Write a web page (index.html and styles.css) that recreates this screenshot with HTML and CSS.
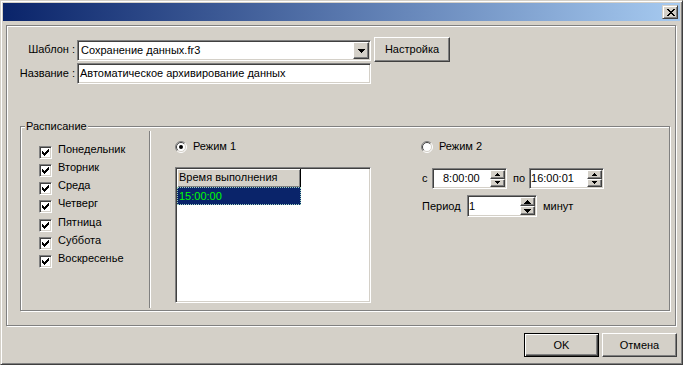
FILE: index.html
```html
<!DOCTYPE html>
<html lang="ru">

<head>
    <meta charset="UTF-8">
    <meta name="viewport" content="width=device-width, initial-scale=1.0">
    <title>Расписание отчёта</title>
    <link rel="stylesheet" href="styles.css">
</head>

<body>
    <div class="window">
        <div class="titlebar">
            <button class="close-btn">
                <svg width="8" height="7" viewBox="0 0 8 7"><path d="M0 0h2v1H0zM6 0h2v1H6zM1 1h2v1H1zM5 1h2v1H5zM2 2h4v1H2zM3 3h2v1H3zM2 4h4v1H2zM1 5h2v1H1zM5 5h2v1H5zM0 6h2v1H0zM6 6h2v1H6z" fill="#000"/></svg>
            </button>
        </div>

        <div class="panel">
            <div class="form-grid">
                <span class="field-label">Шаблон :</span>
                <div class="combo sunken">
                    <span class="combo-text">Сохранение данных.fr3</span>
                    <span class="combo-arrow raised">
                        <svg width="7" height="4" viewBox="0 0 7 4"><path d="M0 0h7v1H0zM1 1h5v1H1zM2 2h3v1H2zM3 3h1v1H3z" fill="#000"/></svg>
                    </span>
                </div>
                <button class="btn btn-setup">Настройка</button>
                <span class="field-label">Название :</span>
                <div class="name-edit sunken">Автоматическое архивирование данных</div>
            </div>

            <div class="groupbox">
                <span class="legend">Расписание</span>

                <div class="days">
                    <div class="day"><span class="checkbox sunken"><svg width="7" height="7" viewBox="0 0 7 7"><path d="M6 0h1v1H6zM5 1h2v1H5zM0 2h1v1H0zM4 2h3v1H4zM0 3h2v1H0zM3 3h3v1H3zM0 4h5v1H0zM1 5h3v1H1zM2 6h1v1H2z" fill="#000"/></svg></span>Понедельник</div>
                    <div class="day"><span class="checkbox sunken"><svg width="7" height="7" viewBox="0 0 7 7"><path d="M6 0h1v1H6zM5 1h2v1H5zM0 2h1v1H0zM4 2h3v1H4zM0 3h2v1H0zM3 3h3v1H3zM0 4h5v1H0zM1 5h3v1H1zM2 6h1v1H2z" fill="#000"/></svg></span>Вторник</div>
                    <div class="day"><span class="checkbox sunken"><svg width="7" height="7" viewBox="0 0 7 7"><path d="M6 0h1v1H6zM5 1h2v1H5zM0 2h1v1H0zM4 2h3v1H4zM0 3h2v1H0zM3 3h3v1H3zM0 4h5v1H0zM1 5h3v1H1zM2 6h1v1H2z" fill="#000"/></svg></span>Среда</div>
                    <div class="day"><span class="checkbox sunken"><svg width="7" height="7" viewBox="0 0 7 7"><path d="M6 0h1v1H6zM5 1h2v1H5zM0 2h1v1H0zM4 2h3v1H4zM0 3h2v1H0zM3 3h3v1H3zM0 4h5v1H0zM1 5h3v1H1zM2 6h1v1H2z" fill="#000"/></svg></span>Четверг</div>
                    <div class="day"><span class="checkbox sunken"><svg width="7" height="7" viewBox="0 0 7 7"><path d="M6 0h1v1H6zM5 1h2v1H5zM0 2h1v1H0zM4 2h3v1H4zM0 3h2v1H0zM3 3h3v1H3zM0 4h5v1H0zM1 5h3v1H1zM2 6h1v1H2z" fill="#000"/></svg></span>Пятница</div>
                    <div class="day"><span class="checkbox sunken"><svg width="7" height="7" viewBox="0 0 7 7"><path d="M6 0h1v1H6zM5 1h2v1H5zM0 2h1v1H0zM4 2h3v1H4zM0 3h2v1H0zM3 3h3v1H3zM0 4h5v1H0zM1 5h3v1H1zM2 6h1v1H2z" fill="#000"/></svg></span>Суббота</div>
                    <div class="day"><span class="checkbox sunken"><svg width="7" height="7" viewBox="0 0 7 7"><path d="M6 0h1v1H6zM5 1h2v1H5zM0 2h1v1H0zM4 2h3v1H4zM0 3h2v1H0zM3 3h3v1H3zM0 4h5v1H0zM1 5h3v1H1zM2 6h1v1H2z" fill="#000"/></svg></span>Воскресенье</div>
                </div>

                <div class="separator"></div>

                <div class="mode mode-one">
                    <div class="radio-row">
                        <svg class="radio" width="12" height="12" viewBox="0 0 12 12">
                            <circle cx="6" cy="6" r="5" fill="#fff"/>
                            <path d="M2.1 9.9A5.5 5.5 0 0 1 9.9 2.1" fill="none" stroke="#808080"/>
                            <path d="M9.9 2.1A5.5 5.5 0 0 1 2.1 9.9" fill="none" stroke="#fff"/>
                            <path d="M2.8 9.2A4.5 4.5 0 0 1 9.2 2.8" fill="none" stroke="#404040"/>
                            <path d="M9.2 2.8A4.5 4.5 0 0 1 2.8 9.2" fill="none" stroke="#d4d0c8"/>
                            <circle cx="6" cy="6" r="2" fill="#000"/>
                        </svg>
                        <span>Режим 1</span>
                    </div>
                    <div class="listbox sunken">
                        <div class="list-header">Время выполнения</div>
                        <div class="list-row selected">15:00:00</div>
                    </div>
                </div>

                <div class="mode mode-two">
                    <div class="radio-row">
                        <svg class="radio" width="12" height="12" viewBox="0 0 12 12">
                            <circle cx="6" cy="6" r="5" fill="#fff"/>
                            <path d="M2.1 9.9A5.5 5.5 0 0 1 9.9 2.1" fill="none" stroke="#808080"/>
                            <path d="M9.9 2.1A5.5 5.5 0 0 1 2.1 9.9" fill="none" stroke="#fff"/>
                            <path d="M2.8 9.2A4.5 4.5 0 0 1 9.2 2.8" fill="none" stroke="#404040"/>
                            <path d="M9.2 2.8A4.5 4.5 0 0 1 2.8 9.2" fill="none" stroke="#d4d0c8"/>
                        </svg>
                        <span>Режим 2</span>
                    </div>
                    <div class="range-row">
                        <span class="from-label">с</span>
                        <div class="time-edit sunken">
                            <span class="time-text indent">8:00:00</span>
                            <span class="spin">
                                <span class="spin-btn raised"><svg width="5" height="3" viewBox="0 0 5 3"><path d="M2 0h1v1H2zM1 1h3v1H1zM0 2h5v1H0z" fill="#000"/></svg></span>
                                <span class="spin-btn raised"><svg width="5" height="3" viewBox="0 0 5 3"><path d="M0 0h5v1H0zM1 1h3v1H1zM2 2h1v1H2z" fill="#000"/></svg></span>
                            </span>
                        </div>
                        <span class="to-label">по</span>
                        <div class="time-edit sunken">
                            <span class="time-text">16:00:01</span>
                            <span class="spin">
                                <span class="spin-btn raised"><svg width="5" height="3" viewBox="0 0 5 3"><path d="M2 0h1v1H2zM1 1h3v1H1zM0 2h5v1H0z" fill="#000"/></svg></span>
                                <span class="spin-btn raised"><svg width="5" height="3" viewBox="0 0 5 3"><path d="M0 0h5v1H0zM1 1h3v1H1zM2 2h1v1H2z" fill="#000"/></svg></span>
                            </span>
                        </div>
                    </div>
                    <div class="period-row">
                        <span class="period-label">Период</span>
                        <div class="spin-edit sunken">
                            <span class="time-text">1</span>
                            <span class="spin">
                                <span class="spin-btn raised"><svg width="7" height="4" viewBox="0 0 7 4"><path d="M3 0h1v1H3zM2 1h3v1H2zM1 2h5v1H1zM0 3h7v1H0z" fill="#000"/></svg></span>
                                <span class="spin-btn raised"><svg width="7" height="4" viewBox="0 0 7 4"><path d="M0 0h7v1H0zM1 1h5v1H1zM2 2h3v1H2zM3 3h1v1H3z" fill="#000"/></svg></span>
                            </span>
                        </div>
                        <span class="unit-label">минут</span>
                    </div>
                </div>
            </div>
        </div>

        <div class="footer">
            <button class="btn btn-default">OK</button>
            <button class="btn">Отмена</button>
        </div>
    </div>
</body>

</html>
```

FILE: styles.css
```css
* {
    box-sizing: border-box;
}

body {
    margin: 0;
    background: #d4d0c8;
    font-family: "Liberation Sans", Arial, sans-serif;
    font-size: 11px;
    line-height: 13px;
    color: #000;
}

/* bevels */
.raised {
    background: #d4d0c8;
    border: 1px solid;
    border-color: #fff #404040 #404040 #fff;
    box-shadow: inset -1px -1px 0 #808080;
}

.sunken {
    background: #fff;
    border: 1px solid;
    border-color: #808080 #fff #fff #808080;
    box-shadow: inset 1px 1px 0 #404040, inset -1px -1px 0 #d4d0c8;
}

.window {
    width: 683px;
    height: 365px;
    padding: 2px;
    background: #d4d0c8;
    border: 1px solid;
    border-color: #d4d0c8 #404040 #404040 #d4d0c8;
    box-shadow: inset 1px 1px 0 #fff, inset -1px -1px 0 #808080;
}

.titlebar {
    height: 18px;
    display: flex;
    justify-content: flex-end;
    align-items: center;
    padding-right: 2px;
    background: linear-gradient(to right, #0a246a, #a6caf0);
}

.close-btn {
    width: 16px;
    height: 14px;
    padding: 0 0 0 1px;
    display: flex;
    align-items: center;
    justify-content: center;
    background: #d4d0c8;
    border: 1px solid;
    border-color: #d4d0c8 #404040 #404040 #d4d0c8;
    box-shadow: inset 1px 1px 0 #fff, inset -1px -1px 0 #808080;
}

.close-btn svg {
    display: block;
}

.panel {
    width: 670px;
    height: 301px;
    margin: 4px 0 0 3px;
    border: 1px solid #808080;
    box-shadow: 1px 1px 0 #fff, inset 1px 1px 0 #fff;
}

/* template / name */
.form-grid {
    display: grid;
    grid-template-columns: 68px 294px 77px;
    grid-template-rows: 25px 21px;
    column-gap: 2px;
    row-gap: 1px;
    align-items: start;
    padding-top: 11px;
}

.field-label {
    align-self: center;
    text-align: right;
    white-space: nowrap;
}

.combo {
    display: flex;
    height: 21px;
    margin-top: 3px;
    padding: 1px;
}

.combo-text {
    flex: 1;
    padding-left: 2px;
    line-height: 17px;
}

.combo-arrow {
    width: 16px;
    height: 17px;
    display: flex;
    align-items: center;
    justify-content: center;
}

.combo-arrow svg {
    display: block;
}

.name-edit {
    grid-column: 2;
    height: 21px;
    padding: 1px 1px 1px 2px;
    line-height: 17px;
    white-space: nowrap;
}

.btn {
    width: 75px;
    height: 24px;
    padding: 0;
    font: inherit;
    color: #000;
    background: #d4d0c8;
    border: 1px solid;
    border-color: #fff #404040 #404040 #fff;
    box-shadow: inset -1px -1px 0 #808080;
}

.btn-setup {
    width: 76px;
    height: 25px;
    margin-left: 1px;
}

.btn-default {
    border: 1px solid #000;
    box-shadow: inset 1px 1px 0 #fff, inset -1px -1px 0 #404040, inset -2px -2px 0 #808080;
}

/* schedule group */
.groupbox {
    position: relative;
    display: flex;
    width: 650px;
    height: 185px;
    margin: 42px 0 0 13px;
    border: 1px solid #808080;
    box-shadow: 1px 1px 0 #fff, inset 1px 1px 0 #fff;
}

.legend {
    position: absolute;
    top: -7px;
    left: 4px;
    padding: 0 1px;
    background: #d4d0c8;
}

.days {
    width: 128px;
    padding: 15.5px 0 0 18px;
}

.day {
    display: flex;
    align-items: flex-start;
    height: 18.33px;
    white-space: nowrap;
}

.checkbox {
    width: 13px;
    height: 13px;
    margin: 3px 6px 0 0;
    padding: 2px;
    flex-shrink: 0;
}

.checkbox svg {
    display: block;
}

.separator {
    width: 2px;
    height: 177px;
    margin-top: 4px;
    border-left: 1px solid #808080;
    border-right: 1px solid #fff;
}

.mode-one {
    padding-left: 24px;
}

.mode-two {
    margin-left: 50px;
}

.radio-row {
    display: flex;
    align-items: center;
    height: 13px;
    margin-top: 13px;
    white-space: nowrap;
}

.radio {
    display: block;
    margin-right: 6px;
}

.listbox {
    width: 196px;
    height: 136px;
    margin-top: 14px;
    padding: 1px;
}

.list-header {
    width: 124px;
    height: 18px;
    padding-left: 2px;
    line-height: 17px;
    background: #d4d0c8;
    border-right: 1px solid #000;
    box-shadow: inset 1px 1px 0 #fff, inset -1px -1px 0 #808080;
    white-space: nowrap;
}

.list-row {
    width: 124px;
    height: 18px;
    padding-left: 2px;
    line-height: 18px;
}

.selected {
    background: #0a246a;
    color: #00ff00;
    outline: 1px dotted #9fd3c0;
    outline-offset: -1px;
}

/* mode 2 */
.range-row,
.period-row {
    display: flex;
    align-items: center;
    padding-left: 1px;
    white-space: nowrap;
}

.range-row {
    margin-top: 15px;
}

.period-row {
    margin-top: 6px;
}

.from-label {
    width: 10px;
}

.to-label {
    margin: 0 4px 0 6px;
}

.period-label {
    width: 45px;
}

.unit-label {
    margin-left: 6px;
}

.time-edit,
.spin-edit {
    display: flex;
    padding: 1px;
}

.time-edit {
    width: 75px;
    height: 21px;
}

.spin-edit {
    width: 70px;
    height: 22px;
}

.time-text {
    flex: 1;
    align-self: center;
}

.time-text.indent {
    padding-left: 9px;
}

.spin {
    display: flex;
    flex-direction: column;
    width: 15px;
}

.spin-btn {
    flex: 1;
    display: flex;
    align-items: center;
    justify-content: center;
}

.spin-btn svg {
    display: block;
}

.footer {
    display: flex;
    justify-content: flex-end;
    gap: 3px;
    margin-top: 7px;
    padding-right: 3px;
}
```
